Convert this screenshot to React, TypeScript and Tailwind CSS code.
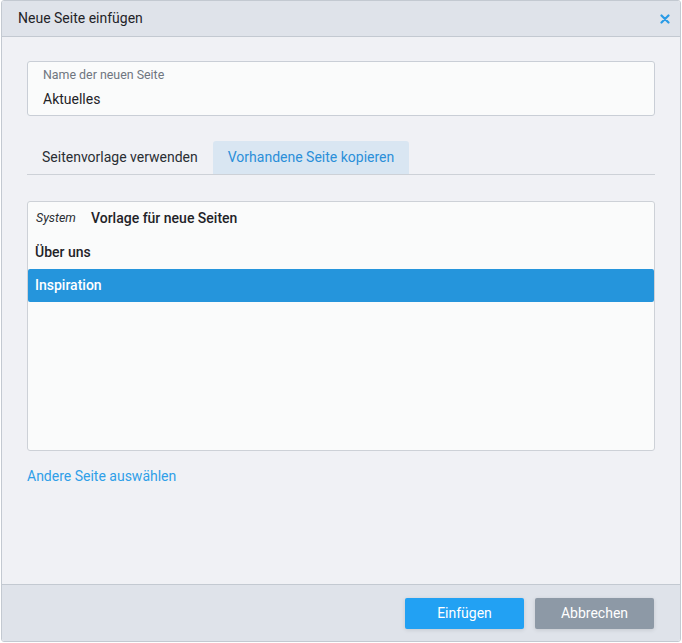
import React from "react";

export default function App() {
  return (
    <div
      className="w-[682px] h-[643px] bg-white"
      style={{ fontFamily: "Roboto, 'Liberation Sans', sans-serif" }}
    >
      <div className="ml-px w-[680px] h-[642px] border border-[#c3c9d1] rounded-[3px] flex flex-col overflow-hidden">
        <div className="h-[36px] shrink-0 bg-[#dfe3ea] border-b border-[#c3c9d1] pl-[16px] pr-[9px] flex items-center justify-between">
          <span className="text-[14px] text-[#1f2328]">Neue Seite einfügen</span>
          <svg width="10" height="10" viewBox="0 0 10 10" className="mr-[1px]">
            <path d="M1.5 1.5 L8.5 8.5 M8.5 1.5 L1.5 8.5" stroke="#2a9be6" strokeWidth="2.2" strokeLinecap="round" />
          </svg>
        </div>
        <div className="flex-1 bg-[#f0f1f5] px-[25px] pt-[24px]">
          <div className="h-[55px] border border-[#c9ced6] rounded-[3px] bg-[#fafbfb] px-[15px] pt-[5px]">
            <div className="text-[12.4px] leading-[16px] text-[#6f7680]">Name der neuen Seite</div>
            <div className="text-[14px] leading-[20px] mt-[6px] text-[#1f2328]">Aktuelles</div>
          </div>
          <div className="mt-[25px] flex border-b border-[#cdd1d7]">
            <div className="h-[33px] px-[15px] flex items-center text-[14px] text-[#2a2e33]">Seitenvorlage verwenden</div>
            <div className="h-[33px] px-[15px] flex items-center text-[14px] text-[#2b8fd9] bg-[#d9e6f2] rounded-t-[3px]">Vorhandene Seite kopieren</div>
          </div>
          <div className="mt-[26px] h-[250px] border border-[#cdd1d7] rounded-[3px] bg-[#fafbfb]">
            <div className="h-[33px] px-[8px] flex items-center">
              <span className="text-[12.4px] italic text-[#2a2e33] w-[55px]">System</span>
              <span className="text-[14px] font-medium text-[#1f2328]">Vorlage für neue Seiten</span>
            </div>
            <div className="h-[34px] px-[7px] flex items-center text-[14px] font-medium text-[#1f2328]">Über uns</div>
            <div className="h-[33px] px-[7px] flex items-center text-[14px] font-medium text-white bg-[#2595dc] rounded-[2px]">Inspiration</div>
          </div>
          <div className="mt-[15px] text-[14px] leading-[20px] text-[#2f9fe8]">Andere Seite auswählen</div>
        </div>
        <div className="h-[57px] shrink-0 bg-[#dfe3ea] border-t border-[#c3c9d1] flex items-center justify-end gap-[11px] pr-[26px]">
          <div className="w-[119px] h-[31px] rounded-[2px] bg-[#22a1f3] text-white text-[14px] flex items-center justify-center shadow-[0_1px_4px_rgba(0,0,0,0.12)]">Einfügen</div>
          <div className="w-[119px] h-[31px] rounded-[2px] bg-[#8d99a6] text-white text-[14px] flex items-center justify-center shadow-[0_1px_4px_rgba(0,0,0,0.12)]">Abbrechen</div>
        </div>
      </div>
    </div>
  );
}
